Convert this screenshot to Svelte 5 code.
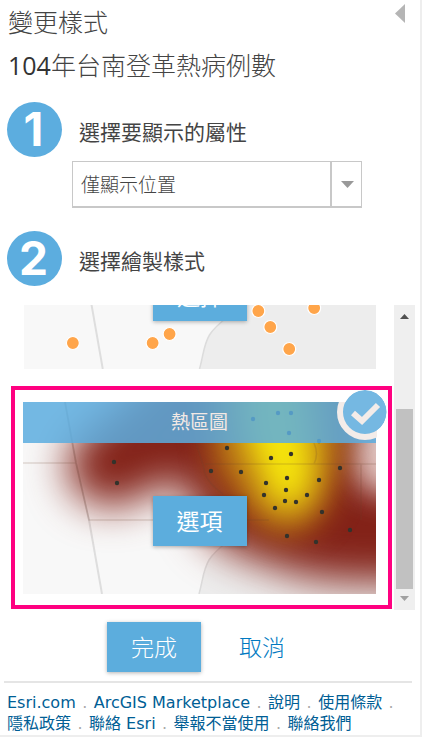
<script>
  let attribute = $state('location');

  const cases = [
    [49, 166], [129, 166], [146, 157], [235, 134], [247, 150], [266, 172], [291, 131]
  ];
  const heatPoints = [
    [91, 60], [94, 81], [204, 46], [248, 56], [268, 52], [188, 69], [218, 70], [243, 81],
    [264, 76], [296, 78], [317, 66], [263, 88], [241, 93], [284, 93], [262, 99], [273, 100],
    [252, 106], [299, 110], [264, 134], [293, 140], [327, 128],
    [230, 17], [255, 11], [268, 11], [266, 31], [296, 39]
  ];
  const links = ['Esri.com', 'ArcGIS Marketplace', '說明', '使用條款', '隱私政策', '聯絡 Esri', '舉報不當使用', '聯絡我們'];
</script>

{#snippet basemap()}
  <rect width="353" height="192" fill="#f8f8f8" />
  <path d="M176 192 C180 178 180 168 186 158 S202 142 214 132 L250 90 L270 0 H353 V192Z" fill="#ededed" />
  <path d="M176 192 C180 178 180 168 186 158 S202 142 214 132" fill="none" stroke="#dcdcdc" stroke-width="1.5" />
  <path d="M42 0 L53 61 L66 118 L79 192" fill="none" stroke="#dedede" stroke-width="2" />
{/snippet}

<main class="panel">
  <header>
    <h1>變更樣式</h1>
    <button class="collapse" type="button" aria-label="收合">
      <svg width="10" height="19" viewBox="0 0 10 19"><path d="M10 0V19L0 9.500Z" fill="#b5b5b5" /></svg>
    </button>
    <h2><span class="year">104</span>年台南登革熱病例數</h2>
  </header>

  <section class="step">
    <span class="number">1</span>
    <label class="step-title" for="attribute">選擇要顯示的屬性</label>
  </section>
  <div class="picker">
    <select id="attribute" bind:value={attribute}>
      <option value="location">僅顯示位置</option>
    </select>
    <span class="arrow"><svg width="13" height="7" viewBox="0 0 13 7"><path d="M0 0H13L6.500 7Z" fill="#999" /></svg></span>
  </div>
  <section class="step second">
    <span class="number">2</span>
    <h3 class="step-title">選擇繪製樣式</h3>
  </section>

  <div class="styles">
    <div class="viewport">
      <article class="card plain">
        <svg class="map" viewBox="0 0 353 192" preserveAspectRatio="none">
          {@render basemap()}
          {#each cases as [x, y]}
            <circle cx={x} cy={y} r="6.500" fill="#ffa54a" stroke="#fff" stroke-width="1.200" />
          {/each}
        </svg>
        <button class="primary choose" type="button">選擇</button>
      </article>

      <div class="selected">
        <article class="card">
          <svg class="map" viewBox="0 0 353 192" preserveAspectRatio="none">
            <defs>
              <filter id="soft" filterUnits="userSpaceOnUse" x="-100" y="-160" width="640" height="500" color-interpolation-filters="sRGB"><feGaussianBlur stdDeviation="20" /></filter>
              <filter id="glow" filterUnits="userSpaceOnUse" x="-100" y="-160" width="640" height="500" color-interpolation-filters="sRGB"><feGaussianBlur stdDeviation="15" /></filter>
            </defs>
            {@render basemap()}
            <path d="M150 -60 C120 0 58 22 46 52 C38 80 60 107 96 104 C122 101 138 72 154 82 C174 92 170 112 184 132 C204 152 240 160 272 172 C310 183 360 180 430 180 V75 C370 84 336 74 336 44 L360 -60Z" fill="#832218" filter="url(#soft)" />
            <ellipse cx="358" cy="64" rx="20" ry="28" fill="#ecd0cc" fill-opacity="0.900" filter="url(#glow)" />
            <path d="M188 -30 C186 20 184 64 206 84 C222 104 232 128 258 132 C288 134 302 112 310 84 C322 50 322 0 310 -30Z" fill="#bd7a16" fill-opacity="0.950" filter="url(#glow)" />
            <path d="M220 -30 C216 10 222 44 234 64 C242 84 244 102 260 106 C282 109 290 88 291 66 C290 36 284 0 280 -30Z" fill="#f5e40c" filter="url(#glow)" />
            <path d="M0 61H53M42 0L53 61L66 118H246M173 41L181 66Q181 78 200 92M182 62H353M338 62V118M291 41Q296 52 291 62" fill="none" stroke="#684030" stroke-opacity="0.180" stroke-width="1.500" />
            {#each heatPoints as [x, y]}
              <circle cx={x} cy={y} r="2.200" fill="#33332c" />
            {/each}
          </svg>
          <h4 class="strip">熱區圖</h4>
          <svg class="check" width="51" height="51" viewBox="0 0 51 51">
            <circle cx="28" cy="22" r="25" fill="#75b8e2" stroke="#f3ece9" stroke-width="6" />
            <path d="M40 0H51V51H40V40A22 22 0 0 0 40 4Z" fill="#fff" />
            <path d="M40 4A22 22 0 0 1 40 40Z" fill="#75b8e2" />
            <path d="M0 0H51V12H47.600A22 22 0 0 0 8.400 12H0Z" fill="#fff" />
            <path d="M16 23L25 31L41 15" fill="none" stroke="#f3ece9" stroke-width="6" />
          </svg>
          <button class="primary choose" type="button">選項</button>
        </article>
      </div>
    </div>

    <div class="scrollbar" aria-hidden="true">
      <svg width="9" height="5" viewBox="0 0 9 5"><path d="M0 5H9L4.500 0Z" fill="#505050" /></svg>
      <span class="thumb"></span>
      <svg width="9" height="5" viewBox="0 0 9 5"><path d="M0 0H9L4.500 5Z" fill="#a0a0a0" /></svg>
    </div>
  </div>

  <div class="actions">
    <button class="primary" type="button">完成</button>
    <button class="cancel" type="button">取消</button>
  </div>

  <footer>
    {#each links as name, i}
      <span class="item"><a href="#{i}">{name}</a>{#if i < links.length - 1}<span class="dot">.</span>{/if}</span>
    {/each}
  </footer>
</main>

<style>
  :global(body) { margin: 0; background: #fff; }
  * { box-sizing: border-box; }
  .panel {
    margin-right: 1px;
    border-right: 2px solid #eee;
    border-bottom: 2px solid #eee;
    font-family: "Open Sans", "Noto Sans CJK TC", sans-serif;
    color: #444;
    background: #fff;
  }
  header { position: relative; padding: 1px 8px 0; }
  h1, h2, h3, h4 { margin: 0; font-weight: 300; }
  h1, h2 { font-size: 25px; line-height: 43px; }
  .year { font-weight: 400; color: #333; }
  button { border: 0; padding: 0; font: inherit; cursor: pointer; background: none; }
  svg { display: block; }
  .collapse { position: absolute; top: 4px; right: 15px; }
  .step { display: flex; align-items: center; gap: 17px; padding-left: 7px; margin-top: 15px; }
  .second { margin-top: 23px; }
  .number {
    display: grid;
    place-items: center;
    width: 55px;
    height: 55px;
    border-radius: 50%;
    padding-right: 2px;
    background: #5caddf;
    color: #fff;
    font: 700 46px/55px Inter, sans-serif;
  }
  .step-title { font-size: 21px; line-height: 32px; font-weight: 400; padding-top: 5px; }
  .picker { display: grid; grid-template-columns: 1fr 30px; margin: 4px 58px 0 72px; height: 47px; }
  select {
    appearance: none;
    grid-area: 1 / 1 / 2 / 3;
    width: 100%;
    border: 1px solid #c8c8c8;
    border-bottom-width: 2px;
    border-radius: 0;
    background: #fff;
    padding: 0 40px 2px 8px;
    font: 300 19px "Noto Sans CJK TC", sans-serif;
    color: #444;
  }
  .arrow {
    grid-area: 1 / 2;
    display: grid;
    place-items: center;
    border-left: 2px solid #c8c8c8;
    margin-left: -2px;
    pointer-events: none;
    z-index: 1;
  }
  .styles { display: flex; height: 305px; margin: 19px 5px 0 11px; }
  .viewport { flex: 1; display: flex; flex-direction: column; justify-content: flex-end; overflow: hidden; padding: 0 2px 1px 0; }
  .card { position: relative; flex: none; height: 192px; }
  .plain { margin: 0 16px 17px 13px; }
  .map { width: 100%; height: 192px; }
  .selected { flex: none; border: 4px solid #ff0080; padding: 12px 12px 11px 8px; }
  .strip {
    position: absolute;
    inset: 0 0 auto;
    height: 41px;
    background: rgba(92, 173, 223, 0.85);
    color: #f3e9e5;
    font-size: 19px;
    font-weight: 400;
    line-height: 41px;
    text-align: center;
  }
  .check { position: absolute; top: -12px; right: -12px; }
  .primary {
    width: 94px;
    height: 50px;
    background: #5caddd;
    color: #fff;
    font-size: 23px;
    line-height: 50px;
    box-shadow: 0 1px 4px rgba(0, 0, 0, 0.3);
  }
  .choose { position: absolute; top: 94px; left: calc(50% - 47px); }
  .scrollbar {
    width: 21px;
    display: flex;
    flex-direction: column;
    align-items: center;
    padding: 9px 0;
    background: #efefef;
  }
  .thumb { width: 17px; height: 180px; margin: auto 0 7px; background: #c1c1c1; }
  .actions { display: flex; justify-content: center; gap: 38px; padding: 12px 28px 9px 0; font-weight: 300; }
  .cancel { font-size: 23px; line-height: 50px; color: #0079c1; }
  footer {
    display: flex;
    flex-wrap: wrap;
    margin: 0 8px 0 4px;
    padding: 9px 3px 1px;
    border-top: 2px solid #e5e5e5;
    font: 16px/21px "DejaVu Sans", "Noto Sans CJK TC", sans-serif;
    color: #aaa;
  }
  .item { display: flex; white-space: nowrap; }
  footer a { color: #005e95; text-decoration: none; }
  .dot { width: 18px; text-align: center; }
</style>
